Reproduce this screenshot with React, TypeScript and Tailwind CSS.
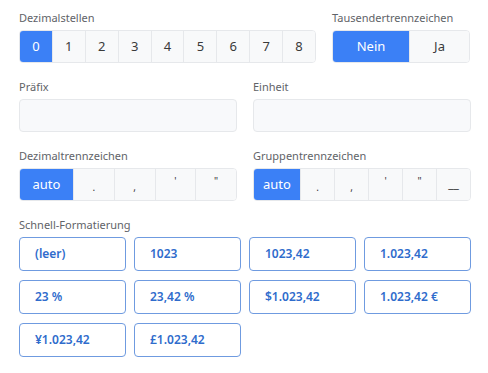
import React from "react";

const font = { fontFamily: '"Noto Sans", "Open Sans", sans-serif' };

function Label({ children }: { children: React.ReactNode }) {
  return <div className="text-[11px] leading-[16px] text-[#5f6368] mb-[4px]">{children}</div>;
}

function Seg({
  children,
  active,
  className = "",
  glyph = false,
}: {
  children: React.ReactNode;
  active?: boolean;
  className?: string;
  glyph?: boolean;
}) {
  return (
    <div
      className={
        "h-full flex items-center justify-center border-l border-[#e6e8eb] first:border-l-0 " +
        (active ? "bg-[#3b80f6] text-white text-[13px] " : "bg-[#f8f9fa] text-[#3a3a3a] ") +
        (glyph && !active ? "text-[10px] " : "text-[13px] ") +
        className
      }
    >
      {children}
    </div>
  );
}

function Group({ children, className = "" }: { children: React.ReactNode; className?: string }) {
  return (
    <div className={"flex h-[33px] rounded-[4px] overflow-hidden border border-[#e6e8eb] " + className}>
      {children}
    </div>
  );
}

const quick = [
  "(leer)",
  "1023",
  "1023,42",
  "1.023,42",
  "23 %",
  "23,42 %",
  "$1.023,42",
  "1.023,42 €",
  "¥1.023,42",
  "£1.023,42",
];

export default function App() {
  return (
    <div className="w-[488px] h-[373px] bg-white pl-[19px] pr-[17px] pt-[10px]" style={font}>
      <div className="flex gap-[16px]">
        <div>
          <Label>Dezimalstellen</Label>
          <Group className="w-[297px]">
            {["0", "1", "2", "3", "4", "5", "6", "7", "8"].map((d, i) => (
              <Seg key={d} active={i === 0} className="flex-1">
                {d}
              </Seg>
            ))}
          </Group>
        </div>
        <div>
          <Label>Tausendertrennzeichen</Label>
          <Group className="w-[138px]">
            <Seg active className="w-[76px]">Nein</Seg>
            <Seg className="flex-1">Ja</Seg>
          </Group>
        </div>
      </div>

      <div className="grid grid-cols-2 gap-x-[16px] mt-[16px]">
        <div>
          <Label>Präfix</Label>
          <div className="h-[33px] rounded-[4px] border border-[#e6e8eb] bg-[#f8f9fb]" />
        </div>
        <div>
          <Label>Einheit</Label>
          <div className="h-[33px] rounded-[4px] border border-[#e6e8eb] bg-[#f8f9fb]" />
        </div>
      </div>

      <div className="grid grid-cols-2 gap-x-[16px] mt-[16px]">
        <div>
          <Label>Dezimaltrennzeichen</Label>
          <Group>
            <Seg active className="w-[53px]">auto</Seg>
            <Seg glyph className="flex-1 pt-[6px]">.</Seg>
            <Seg glyph className="flex-1 pt-[6px]">,</Seg>
            <Seg glyph className="flex-1 pb-[6px]">'</Seg>
            <Seg glyph className="flex-1 pb-[6px]">"</Seg>
          </Group>
        </div>
        <div>
          <Label>Gruppentrennzeichen</Label>
          <Group>
            <Seg active className="w-[46px]">auto</Seg>
            <Seg glyph className="flex-1 pt-[6px]">.</Seg>
            <Seg glyph className="flex-1 pt-[6px]">,</Seg>
            <Seg glyph className="flex-1 pb-[6px]">'</Seg>
            <Seg glyph className="flex-1 pb-[6px]">"</Seg>
            <Seg className="flex-1 pb-[2px]">
              <span className="text-[12px]">__</span>
            </Seg>
          </Group>
        </div>
      </div>

      <div className="mt-[16px]">
        <Label>Schnell-Formatierung</Label>
        <div className="grid grid-cols-4 gap-x-[8px] gap-y-[9px]">
          {quick.map((q) => (
            <div
              key={q}
              className="h-[34px] flex items-center px-[15px] rounded-[4px] border border-[#6f9be0] bg-white text-[12px] font-semibold text-[#2f6ccc]"
            >
              {q}
            </div>
          ))}
        </div>
      </div>
    </div>
  );
}
